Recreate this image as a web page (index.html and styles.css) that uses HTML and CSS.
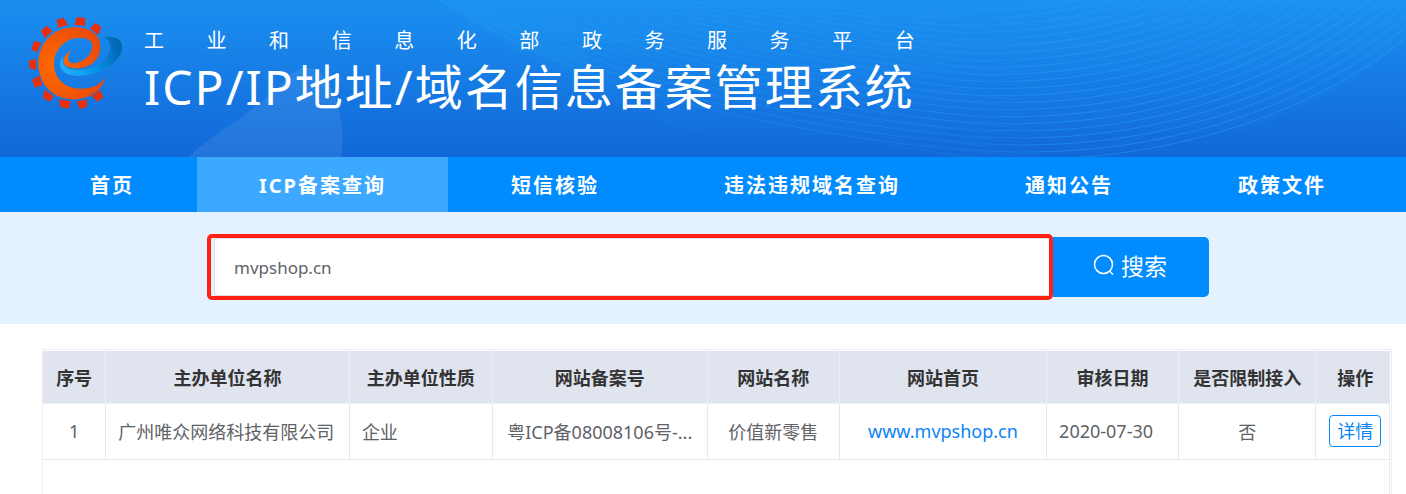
FILE: index.html
```html
<!DOCTYPE html>
<html lang="zh-CN">
<head>
    <meta charset="UTF-8">
    <meta name="viewport" content="width=device-width, initial-scale=1.0">
    <title>ICP/IP地址/域名信息备案管理系统</title>
    <link rel="stylesheet" href="styles.css">
</head>
<body>
    <header class="header">
        <svg class="header-bg" viewBox="0 0 1406 156" preserveAspectRatio="none" aria-hidden="true">
            <defs>
                <linearGradient id="glow" x1="0" y1="0" x2="0" y2="1">
                    <stop offset="0" stop-color="#1ea0f8" stop-opacity=".15"/>
                    <stop offset="1" stop-color="#1ea0f8" stop-opacity="0"/>
                </linearGradient>
                <linearGradient id="arc-right" gradientUnits="userSpaceOnUse" x1="860" y1="0" x2="1060" y2="0">
                    <stop offset="0" stop-color="#27a5f7" stop-opacity="0"/>
                    <stop offset="1" stop-color="#27a5f7"/>
                </linearGradient>
                <linearGradient id="arc-left" gradientUnits="userSpaceOnUse" x1="900" y1="0" x2="1060" y2="0">
                    <stop offset="0" stop-color="#27a5f7"/>
                    <stop offset="1" stop-color="#27a5f7" stop-opacity="0"/>
                </linearGradient>
            </defs>
            <path d="M188 156C215 131 248 116 280 85C294 68 304 64 318 70C334 82 347 120 341 156Z" fill="#fff" opacity=".08"/>
            <path d="M440 0C540 70 660 135 800 156H1150C1270 130 1350 90 1406 38V0Z" fill="url(#glow)"/>
            <path d="M440 0C500 14 600 24 700 54C610 36 560 40 600 80C540 60 490 30 440 0Z" fill="#20a8fa" opacity=".12"/>
            <!-- 右侧弧线 -->
            <g class="arcs arcs-right">
                <ellipse cx="1030" cy="-230" rx="520" ry="388"/>
                <ellipse cx="1027" cy="-230" rx="513" ry="381"/>
                <ellipse cx="1024" cy="-230" rx="506" ry="374"/>
                <ellipse cx="1021" cy="-230" rx="499" ry="367"/>
                <ellipse cx="1018" cy="-230" rx="492" ry="360"/>
                <ellipse cx="1015" cy="-230" rx="485" ry="353"/>
                <ellipse cx="1012" cy="-230" rx="478" ry="346"/>
                <ellipse cx="1009" cy="-230" rx="471" ry="339"/>
                <ellipse cx="1006" cy="-230" rx="464" ry="332"/>
                <ellipse cx="1003" cy="-230" rx="457" ry="325"/>
                <ellipse cx="1000" cy="-230" rx="450" ry="318"/>
                <ellipse cx="997" cy="-230" rx="443" ry="311"/>
                <ellipse cx="994" cy="-230" rx="436" ry="304"/>
                <ellipse cx="991" cy="-230" rx="429" ry="297"/>
                <ellipse cx="988" cy="-230" rx="422" ry="290"/>
                <ellipse cx="985" cy="-230" rx="415" ry="283"/>
                <ellipse cx="982" cy="-230" rx="408" ry="276"/>
                <ellipse cx="979" cy="-230" rx="401" ry="269"/>
                <ellipse cx="976" cy="-230" rx="394" ry="262"/>
                <ellipse cx="973" cy="-230" rx="387" ry="255"/>
                <ellipse cx="970" cy="-230" rx="380" ry="248"/>
                <ellipse cx="967" cy="-230" rx="373" ry="241"/>
            </g>
            <!-- 左侧弧线 -->
            <g class="arcs arcs-left">
                <path d="M440 0C560 76 740 136 1060 158"/>
                <path d="M452 0C572 72 752 130 1060 151"/>
                <path d="M464 0C584 68 764 124 1060 144"/>
                <path d="M476 0C596 64 776 118 1060 137"/>
                <path d="M488 0C608 60 788 112 1060 130"/>
                <path d="M500 0C620 56 800 105 1060 123"/>
                <path d="M512 0C632 52 812 99 1060 116"/>
                <path d="M524 0C644 48 824 93 1060 109"/>
                <path d="M536 0C656 45 836 87 1060 102"/>
                <path d="M550 0C670 42 850 81 1060 95"/>
                <path d="M566 0C686 38 866 75 1060 88"/>
                <path d="M582 0C702 35 882 69 1060 81"/>
                <path d="M600 0C720 32 890 63 1060 74"/>
                <path d="M618 0C738 29 898 57 1060 67"/>
                <path d="M638 0C758 26 906 51 1060 60"/>
                <path d="M660 0C780 23 914 45 1060 53"/>
                <path d="M684 0C800 20 922 39 1060 46"/>
                <path d="M710 0C820 17 930 33 1060 39"/>
                <path d="M738 0C840 14 938 27 1060 32"/>
                <path d="M768 0C860 11 946 21 1060 25"/>
            </g>
        </svg>
        <div class="brand">
            <svg class="logo" viewBox="84 48 285 282" aria-hidden="true">
                <defs>
                    <radialGradient id="orange" gradientUnits="userSpaceOnUse" cx="165" cy="200" r="150">
                        <stop offset="0" stop-color="#ff6a00"/>
                        <stop offset="1" stop-color="#ea4a0a"/>
                    </radialGradient>
                    <linearGradient id="blue" gradientUnits="userSpaceOnUse" x1="180" y1="205" x2="366" y2="140">
                        <stop offset="0" stop-color="#23b1fb"/>
                        <stop offset=".5" stop-color="#0795ea"/>
                        <stop offset="1" stop-color="#0061ac"/>
                    </linearGradient>
                </defs>
                <g fill="#e62f0c">
                    <path d="M170 59L191 53L204 75L175 83Z"/>
                    <path d="M231 51L255 54L256 78L223 75Z"/>
                    <path d="M286 68L304 81L296 104L270 86Z"/>
                    <path d="M123 93L139 77L158 93L135 115Z"/>
                    <path d="M102 123L125 129L110 157L94 149Z"/>
                    <path d="M87 181L108 177L109 209L88 205Z"/>
                    <path d="M96 239L117 227L128 255L105 263Z"/>
                    <path d="M134 269L162 289L149 305L128 293Z"/>
                    <path d="M179 298L211 303L207 326L179 320Z"/>
                    <path d="M230 304L262 299L260 321L239 327Z"/>
                    <path d="M275 288L300 269L310 292L293 305Z"/>
                </g>
                <path fill="url(#blue)" d="M308 112C344 106 366 118 366 142C366 187 299 228 235 228C196 228 178 208 180 190C181 179 186 173 191 169C186 187 191 200 207 206C250 217 299 203 321 172C339 147 334 120 308 112Z"/>
                <path fill="url(#orange)" d="M316 234C304 275 265 298 220 298C157 298 115 250 115 190C115 130 160 82 222 82C272 82 301 104 301 140C301 180 268 205 232 205C205 205 191 198 191 184C191 168 202 159 214 150C206 163 201 174 206 182C211 191 222 191 234 187C259 179 276 160 277 138C277 121 262 113 239 113C195 113 162 150 162 192C162 236 195 266 243 266C276 266 299 255 316 234Z"/>
            </svg>
            <div class="brand-text">
                <p class="subtitle">工业和信息化部政务服务平台</p>
                <h1>ICP/IP地址/域名信息备案管理系统</h1>
            </div>
        </div>
    </header>

    <nav class="nav">
        <a href="#">首页</a>
        <a href="#" class="active">ICP备案查询</a>
        <a href="#">短信核验</a>
        <a href="#">违法违规域名查询</a>
        <a href="#">通知公告</a>
        <a href="#">政策文件</a>
    </nav>

    <form class="search-bar">
        <div class="search-field">
            <input type="text" class="search-input" value="mvpshop.cn" aria-label="备案查询">
        </div>
        <button type="button" class="search-btn">
            <svg class="search-icon" viewBox="0 0 22 22" aria-hidden="true">
                <circle cx="10.5" cy="10.5" r="9"/>
                <path d="M16.5 17L20 20.5"/>
            </svg>
            搜索
        </button>
    </form>

    <main class="result-box">
        <div class="result-inner">
            <table class="result-table">
                <colgroup>
                    <col class="col-no">
                    <col class="col-unit">
                    <col class="col-type">
                    <col class="col-licence">
                    <col class="col-site">
                    <col class="col-home">
                    <col class="col-date">
                    <col class="col-limit">
                    <col class="col-action">
                </colgroup>
                <thead>
                    <tr>
                        <th>序号</th>
                        <th>主办单位名称</th>
                        <th>主办单位性质</th>
                        <th>网站备案号</th>
                        <th>网站名称</th>
                        <th>网站首页</th>
                        <th>审核日期</th>
                        <th>是否限制接入</th>
                        <th>操作</th>
                    </tr>
                </thead>
                <tbody>
                    <tr>
                        <td>1</td>
                        <td class="left">广州唯众网络科技有限公司</td>
                        <td class="left">企业</td>
                        <td>粤ICP备08008106号-...</td>
                        <td>价值新零售</td>
                        <td><a href="#">www.mvpshop.cn</a></td>
                        <td class="left">2020-07-30</td>
                        <td>否</td>
                        <td><button type="button" class="detail-btn">详情</button></td>
                    </tr>
                </tbody>
            </table>
        </div>
    </main>
</body>
</html>
```

FILE: styles.css
```css
* {
    box-sizing: border-box;
}
body {
    display: flex;
    flex-direction: column;
    min-height: 100vh;
    margin: 0;
    background: #fff;
    color: #606266;
    font-family: "Noto Sans", "Noto Sans CJK SC", sans-serif;
    font-size: 18px;
}
button,
input {
    font-family: inherit;
}
.header {
    position: relative;
    padding: 16px 28px 0;
    height: 157px;
    background: linear-gradient(#1a8ff0, #1268d8);
    overflow: hidden;
}
.header-bg {
    position: absolute;
    top: 0;
    left: 0;
    width: 100%;
    height: 100%;
}
.arcs {
    fill: none;
    stroke-width: 1;
}
.arcs-right {
    stroke: url(#arc-right);
    opacity: .45;
}
.arcs-left {
    stroke: url(#arc-left);
    opacity: .3;
}
.brand {
    position: relative;
    display: flex;
    gap: 21px;
}
.logo {
    flex: none;
    width: 95px;
    height: 94px;
}
.brand-text {
    color: #fff;
}
.subtitle {
    margin: 9px 0 0;
    font-size: 20px;
    line-height: 32px;
    text-align-last: justify;
}
h1 {
    margin: 0;
    font-size: 48px;
    font-weight: 400;
    letter-spacing: 2px;
    line-height: 60px;
    white-space: nowrap;
}
.nav {
    display: flex;
    gap: 1px;
    padding: 0 28px;
    background: #008cff;
}
.nav a {
    padding: 2px 62px 0;
    color: #fff;
    font-size: 20px;
    font-weight: bold;
    letter-spacing: 2px;
    line-height: 53px;
    text-decoration: none;
    white-space: nowrap;
}
.nav .active {
    background: #3ca8ff;
}
.search-bar {
    display: flex;
    align-items: center;
    height: 112px;
    padding: 0 197px 2px 207px;
    background: #e4f2ff;
}
.search-field {
    flex: 1;
    padding-left: 3px;
    border: 4px solid #ff2015;
    border-radius: 5px;
}
.search-input {
    display: block;
    width: 100%;
    height: 58px;
    padding: 0 19px;
    border: 1px solid #dcdfe6;
    border-right: 0;
    border-radius: 4px 0 0 4px;
    background: #fff;
    color: #606266;
    font-size: 17px;
    outline: none;
}
.search-btn {
    display: flex;
    align-items: center;
    justify-content: center;
    gap: 6px;
    width: 156px;
    height: 60px;
    padding: 0 2px 4px 0;
    border: none;
    border-radius: 0 5px 5px 0;
    background: #008cff;
    color: #fff;
    font-size: 23px;
    cursor: pointer;
}
.search-icon {
    width: 22px;
    height: 22px;
    fill: none;
    stroke: #fff;
    stroke-width: 1.5;
}
.result-box {
    display: flex;
    flex: 1;
    margin: 25px 14px 0 42px;
    padding: 1px 1px 0 0;
    border: 1px solid #ebeef5;
    border-bottom: 0;
}
.result-inner {
    flex: 1;
    border-right: 1px solid #e6e8f0;
}
.result-table {
    width: 100%;
    border-collapse: separate;
    border-spacing: 0;
    table-layout: fixed;
}
.col-no { width: 4.7%; }
.col-unit { width: 18.1%; }
.col-type { width: 10.6%; }
.col-licence { width: 16%; }
.col-site { width: 9.8%; }
.col-home { width: 15.4%; }
.col-date { width: 9.8%; }
.col-limit { width: 10.2%; }
.col-action { width: 5.4%; }
.result-table th,
.result-table td {
    padding: 0;
    border-right: 1px solid #e6e8eb;
    border-bottom: 1px solid #e6e8eb;
    text-align: center;
    white-space: nowrap;
}
.result-table th {
    height: 53px;
    border-color: #ebeef5;
    background: #e0e4ef;
    color: #333;
    font-weight: bold;
}
.result-table td {
    height: 56px;
    padding-bottom: 1px;
}
.result-table th:last-child,
.result-table td:last-child {
    padding-left: 5px;
    border-right: 0;
}
.result-table .left {
    padding-left: 12px;
    text-align: left;
}
.result-table a {
    color: #0a84f5;
    text-decoration: none;
}
.detail-btn {
    height: 32px;
    padding: 0 7px;
    border: 1px solid #008cff;
    border-radius: 4px;
    background: #fff;
    color: #0a84f5;
    font-size: 18px;
    line-height: 30px;
    cursor: pointer;
}
```
